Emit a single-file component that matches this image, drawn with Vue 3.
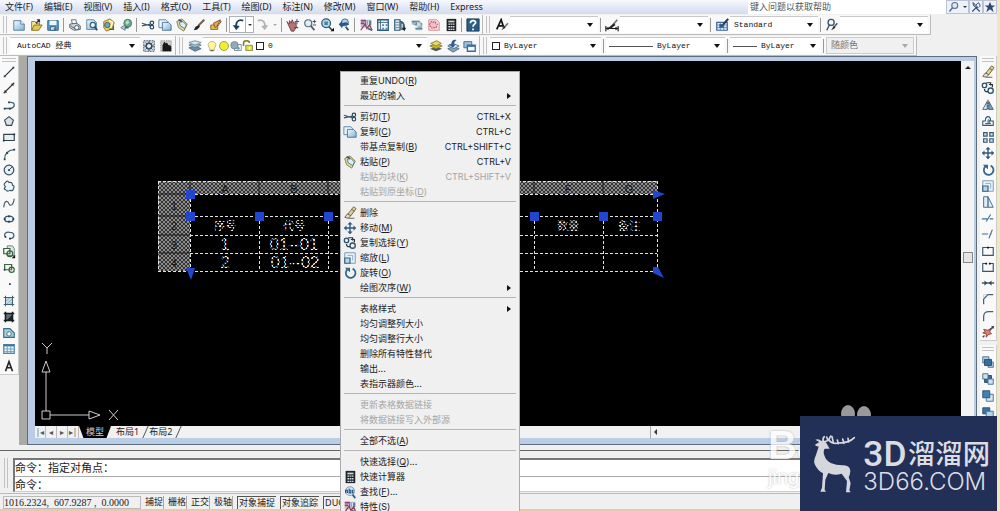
<script setup>
import { ref } from 'vue'

const menus = [
  ['文件', 'F'], ['编辑', 'E'], ['视图', 'V'], ['插入', 'I'], ['格式', 'O'], ['工具', 'T'],
  ['绘图', 'D'], ['标注', 'N'], ['修改', 'M'], ['窗口', 'W'], ['帮助', 'H'],
]

const standardTools = [
  ['new', 'open', 'save'],
  ['print', 'preview', 'publish', 'globe'],
  ['cut', 'copy', 'paste', 'brush', 'blockedit'],
]
const viewTools = [
  ['pan', 'zoom', 'zoomwin', 'zoomprev'],
  ['props', 'center', 'palette', 'sheet', 'markup', 'calc'],
  ['help'],
]
const drawTools = [
  'line', 'xline', 'pline', 'polygon', 'rect', 'arc', 'circle', 'cloud', 'spline', 'ellipse',
  'earc', 'insert', 'block', 'point', 'hatch', 'gradient', 'region', 'table', 'text',
]
const modifyTools = [
  'erase', 'copysel', 'mirror', 'offset', 'array', 'move', 'rotate', 'scale', 'stretch',
  'trim', 'extend', 'breakpt', 'break', 'join', 'chamfer', 'fillet', 'explode',
]
const orderTools = ['front', 'back', 'above', 'under']

const groups = [
  [
    { label: '重复UNDO', key: 'R' },
    { label: '最近的输入', sub: true },
  ],
  [
    { label: '剪切', key: 'T', icon: 'cut', hint: 'CTRL+X' },
    { label: '复制', key: 'C', icon: 'copy', hint: 'CTRL+C' },
    { label: '带基点复制', key: 'B', hint: 'CTRL+SHIFT+C' },
    { label: '粘贴', key: 'P', icon: 'paste', hint: 'CTRL+V' },
    { label: '粘贴为块', key: 'K', hint: 'CTRL+SHIFT+V', off: true },
    { label: '粘贴到原坐标', key: 'D', off: true },
  ],
  [
    { label: '删除', icon: 'erase' },
    { label: '移动', key: 'M', icon: 'move' },
    { label: '复制选择', key: 'Y', icon: 'copysel' },
    { label: '缩放', key: 'L', icon: 'scale' },
    { label: '旋转', key: 'O', icon: 'rotate' },
    { label: '绘图次序', key: 'W', sub: true },
  ],
  [
    { label: '表格样式', sub: true },
    { label: '均匀调整列大小' },
    { label: '均匀调整行大小' },
    { label: '删除所有特性替代' },
    { label: '输出...' },
    { label: '表指示器颜色...' },
  ],
  [
    { label: '更新表格数据链接', off: true },
    { label: '将数据链接写入外部源', off: true },
  ],
  [{ label: '全部不选', key: 'A' }],
  [
    { label: '快速选择', key: 'Q', tail: '...' },
    { label: '快速计算器', icon: 'calc' },
    { label: '查找', key: 'F', tail: '...', icon: 'find' },
    { label: '特性', key: 'S', icon: 'props' },
  ],
]

const modes = [
  ['捕捉', false], ['栅格', false], ['正交', false], ['极轴', false],
  ['对象捕捉', true], ['对象追踪', true], ['DUCS', true],
]

const columns = [155, 224, 293, 362, 430, 499, 568, 622]
const rows = [133, 155, 174, 192, 210]
const grips = [[155, 133], [155, 155], [224, 155], [293, 155], [499, 155], [568, 155], [622, 155]]
const cells = [
  ['序号', 190, 169, 11], ['代号', 259, 169, 11], ['数量', 533, 169, 11], ['备注', 594, 169, 11],
  ['1', 190, 189, 17], ['01--01', 259, 189, 17], ['2', 190, 207, 17], ['01--02', 260, 207, 17],
]
const heads = [['A', 190, 132], ['B', 259, 132], ['F', 533, 132], ['G', 594, 132], ['1', 139, 149], ['2', 139, 169], ['3', 139, 188], ['4', 139, 206]]

const question = ref('')
const command = ref('')
</script>

<template>
  <div class="app">
    <svg class="defs" aria-hidden="true">
      <defs>
        <linearGradient id="sheetFill" x1="0" y1="0" x2="1" y2="1">
          <stop offset="0" stop-color="#f4fbff" /><stop offset="1" stop-color="#7fb2d6" />
        </linearGradient>
        <pattern id="dots" width="4" height="4" patternUnits="userSpaceOnUse">
          <rect width="4" height="4" fill="#343434" />
          <rect width="2" height="2" fill="#8c8c8c" /><rect x="2" y="2" width="2" height="2" fill="#8c8c8c" />
        </pattern>
        <pattern id="spark" width="4" height="4" patternUnits="userSpaceOnUse">
          <rect width="4" height="4" fill="#333" />
          <rect width="2" height="2" fill="#fff" /><rect x="2" y="2" width="2" height="2" fill="#fff" />
        </pattern>
      </defs>
      <symbol id="i-new" viewBox="0 0 16 16"><path d="M2 3h8l4 4v7H2z" fill="url(#sheetFill)" stroke="#4c7896" /><path d="M10 3v4h4" fill="#fff" stroke="#4c7896" /></symbol>
      <symbol id="i-open" viewBox="0 0 16 16"><path d="M3 14V4h4l1 2h4v2" fill="#f7e79b" stroke="#8d7726" /><path d="M3 14l3-6h9l-4 6z" fill="#e8c84d" stroke="#7b671d" /><path d="M8 6l4-4M9 2h3v3" fill="none" stroke="#333" stroke-width="1.3" /></symbol>
      <symbol id="i-save" viewBox="0 0 16 16"><path d="M2 3h12v11H2z" fill="#5c9ac4" stroke="#255d85" /><path d="M4 3h8v5H4z" fill="#e8f5fc" /><path d="M5 10h6v4H5z" fill="#d9e6ef" stroke="#2d5c7d" /><path d="M9 11h1v3H9z" fill="#204968" /></symbol>
      <symbol id="i-print" viewBox="0 0 16 16"><path d="M4 2h5l1 5H5z" fill="#fff" stroke="#567" /><path d="M2 7l8-1 4 3v4l-7 1-5-3z" fill="#d2d8dd" stroke="#475a69" /><circle cx="10" cy="11" r="2.5" fill="#eef4f7" stroke="#456" /><path d="M3 9l5 3" stroke="#456" /></symbol>
      <symbol id="i-preview" viewBox="0 0 16 16"><path d="M2 2h8l3 3v8H2z" fill="url(#sheetFill)" stroke="#557f9b" /><circle cx="9" cy="8" r="3" fill="#eef9ff" stroke="#367" stroke-width="1.4" /><path d="M11 10l3 4" stroke="#324b60" stroke-width="2" /></symbol>
      <symbol id="i-publish" viewBox="0 0 16 16"><path d="M2 4l7-3 5 4-2 7-7 3-3-4z" fill="#e9ce54" stroke="#8b7524" /><circle cx="6" cy="8" r="3" fill="#72a5c5" stroke="#315a77" /><path d="M8 3l4 2-2 6" fill="none" stroke="#fff" stroke-width="1.5" /><path d="M8 13h5V9" fill="none" stroke="#367" stroke-width="1.5" /></symbol>
      <symbol id="i-globe" viewBox="0 0 16 16"><circle cx="10" cy="6" r="4.5" fill="#6ea39b" stroke="#447a70" /><path d="M7 5l3-3 2 3-3 3z" fill="#b8dfae" /><path d="M2 11l5-3v6z" fill="#bdd0d8" stroke="#567785" /><path d="M7 11h4" stroke="#367" stroke-width="2" /></symbol>
      <symbol id="i-cut" viewBox="0 0 16 16"><path d="M1 6l10 3M1 9l10-2" stroke="#3c5972" stroke-width="1.2" /><circle cx="12.5" cy="5.5" r="2" fill="none" stroke="#27455f" stroke-width="1.3" /><circle cx="12.5" cy="10.5" r="2" fill="none" stroke="#27455f" stroke-width="1.3" /></symbol>
      <symbol id="i-copy" viewBox="0 0 16 16"><path d="M1 2h8l2 2v7H1z" fill="#e9f5fb" stroke="#5580a0" /><path d="M5 5h7l3 3v6H5z" fill="url(#sheetFill)" stroke="#416f91" /></symbol>
      <symbol id="i-paste" viewBox="0 0 16 16"><path d="M2 4l6-3 6 6-4 8-6-4z" fill="#e4dda1" stroke="#77764b" /><path d="M5 5l4-1 4 4-2 4-5-3z" fill="#dceef7" stroke="#4d7182" /><path d="M4 2l4 2" stroke="#455" stroke-width="2" /></symbol>
      <symbol id="i-brush" viewBox="0 0 16 16"><path d="M14 2L7 9" stroke="#755d4a" stroke-width="2.4" /><path d="M8 8l1 2-3 3-4 1 2-4z" fill="#222" /></symbol>
      <symbol id="i-blockedit" viewBox="0 0 16 16"><path d="M2 8h8v5H2z" fill="#e0c34f" stroke="#7d6618" /><path d="M5 6l8-4-4 8-2 1z" fill="#e5a747" stroke="#7f5120" /><path d="M12 3l2 1-4 5" fill="none" stroke="#564331" /></symbol>
      <symbol id="i-undo" viewBox="0 0 16 16"><path d="M14 3C8 1 5 5 6 11" fill="none" stroke="#1e3e63" stroke-width="2" /><path d="M2 8l4 6 4-5z" fill="#1e3e63" /></symbol>
      <symbol id="i-redo" viewBox="0 0 16 16"><path d="M2 3c6-2 9 2 8 8" fill="none" stroke="#b3b3b3" stroke-width="2" /><path d="M6 9l4 5 4-6z" fill="#b3b3b3" /></symbol>
      <symbol id="i-pan" viewBox="0 0 16 16"><path d="M1 4l3 3V3l2 3 1-4 2 4 2-1 1 5-3 5H6z" fill="#b77474" stroke="#763d45" /><path d="M10 4h5M12.5 1v6M9 11h5" stroke="#315f83" stroke-width="1.2" /></symbol>
      <symbol id="i-zoom" viewBox="0 0 16 16"><circle cx="6" cy="6" r="4" fill="#e0edf1" stroke="#587281" stroke-width="1.4" /><path d="M9 9l4 5" stroke="#455e70" stroke-width="2" /><path d="M11 4h4M13 2v4M11 8h4" stroke="#345" /></symbol>
      <symbol id="i-zoomwin" viewBox="0 0 16 16"><circle cx="7" cy="6" r="5" fill="#b6d6e7" stroke="#305b7b" stroke-width="1.4" /><path d="M5 4h4v4H5z" fill="#4a83ac" /><path d="M10 10l4 4" stroke="#304c61" stroke-width="2" /><path d="M12 15h4v-4z" fill="#111" /></symbol>
      <symbol id="i-zoomprev" viewBox="0 0 16 16"><circle cx="9" cy="5" r="4" fill="#b5d3e8" stroke="#315e83" /><path d="M2 7l4-4v3c4-2 7-1 8 2-3-1-5 0-8 2v2z" fill="#28598e" /><path d="M10 10l3 4" stroke="#345" stroke-width="2" /></symbol>
      <symbol id="i-props" viewBox="0 0 16 16"><path d="M2 2h12v9H2z" fill="#c2c4d5" /><path d="M2 3h6M2 6h4" stroke="#9a3d70" stroke-width="2" /><path d="M7 3h7v5H7z" fill="#567c91" /><path d="M9 3v5M11 3v5" stroke="#fff" /><path d="M2 14l5-7 2 5 3-4 3 6" fill="none" stroke="#953c52" stroke-width="1.4" /><path d="M10 12l5 2" stroke="#3b6678" stroke-width="2" /></symbol>
      <symbol id="i-center" viewBox="0 0 16 16"><path d="M2 2h12v12H2z" fill="#eff7fa" stroke="#2c5b76" stroke-width="1.5" /><path d="M5 2v12M2 5h12" stroke="#2c5b76" /><path d="M7 7h2v2H7zM11 7h2v2h-2zM7 11h2v2H7zM11 11h2v2h-2z" fill="#4e829d" /></symbol>
      <symbol id="i-palette" viewBox="0 0 16 16"><path d="M2 2h6v12H2z" fill="#e4eff5" stroke="#2c5876" stroke-width="1.4" /><path d="M3 5h4M3 8h4M3 11h4" stroke="#4a7894" /><path d="M8 4q5 0 5 8" fill="none" stroke="#304f65" stroke-width="1.6" /><path d="M9 6h3v7H9z" fill="#b9cdd8" stroke="#304f65" /><path d="M10 11h5l-2 4z" fill="#222" /></symbol>
      <symbol id="i-sheet" viewBox="0 0 16 16"><path d="M2 3h8l4 3v8H6l3-4-7-3z" fill="#9eb8c4" /><path d="M2 4h8l-3 3h7M6 12h8" fill="none" stroke="#668797" stroke-width="1.5" /><path d="M8 4l5 3-5 4z" fill="#cbdbe2" /></symbol>
      <symbol id="i-markup" viewBox="0 0 16 16"><path d="M2 2h9l3 3v9H2z" fill="#f7d8dc" stroke="#d08a94" /><path d="M4 5q2-2 3 0 3-2 3 1 3 1 1 3 0 3-3 2-3 2-3-1-3-1-2-3z" fill="#f0bfc6" stroke="#bb4e60" stroke-width="1.2" stroke-dasharray="2 1" /></symbol>
      <symbol id="i-calc" viewBox="0 0 16 16"><path d="M3 1h11v14H3z" fill="#20242a" /><path d="M5 3h7v2H5z" fill="#c8d6cd" /><path d="M5 7h7M5 10h7M5 13h7" stroke="#d4d9db" stroke-width="1.6" stroke-dasharray="2 .6" /></symbol>
      <symbol id="i-help" viewBox="0 0 16 16"><path d="M1 1h14v14H1z" fill="#285d84" stroke="#173e5a" /><path d="M5 6c0-4 6-4 6-1 0 2-3 2-3 5" fill="none" stroke="#fff" stroke-width="2" /><path d="M7 12h2v2H7z" fill="#fff" /></symbol>
      <symbol id="i-textstyle" viewBox="0 0 16 16"><path d="M2 13L7 2l3 9M4 9h5" fill="none" stroke="#171717" stroke-width="2" /><path d="M15 6l-5 5" stroke="#777" stroke-width="2" /><path d="M11 9l1 2-5 3z" fill="#222" /></symbol>
      <symbol id="i-dimstyle" viewBox="0 0 16 16"><path d="M1 9v6M15 9v6M2 12h12" stroke="#111" stroke-width="1.3" /><path d="M1 12l3-2v4zM15 12l-3-2v4z" fill="#111" /><path d="M14 2L9 8" stroke="#777" stroke-width="2" /><path d="M10 6l2 2-5 4-4 0z" fill="#292929" /></symbol>
      <symbol id="i-tablestyle" viewBox="0 0 16 16"><path d="M2 5h12v9H2z" fill="#e7f0fa" stroke="#36669a" stroke-width="1.4" /><path d="M2 8h12M2 11h12M6 5v9M10 5v9" stroke="#5a83b2" /><path d="M15 1L8 9" stroke="#25394d" stroke-width="2.4" /><path d="M5 7h5v4H5z" fill="#305888" /></symbol>
      <symbol id="i-leader" viewBox="0 0 16 16"><circle cx="7" cy="5" r="3.5" fill="none" stroke="#37536a" stroke-width="1.5" /><path d="M5 8l-3 6M14 6l-4 5" stroke="#37536a" stroke-width="1.6" /><path d="M10 9l2 2-5 3z" fill="#222" /></symbol>
      <symbol id="i-gear" viewBox="0 0 16 16"><path d="M2 2h12v12H2z" fill="#d4dce4" stroke="#30475b" stroke-dasharray="2 1" /><circle cx="8" cy="8" r="3.2" fill="#eee" stroke="#344d62" stroke-width="1.7" /><path d="M8 2v3M8 11v3M2 8h3M11 8h3M4 4l2 2M10 10l2 2M12 4l-2 2M4 12l2-2" stroke="#344d62" /></symbol>
      <symbol id="i-mywork" viewBox="0 0 16 16"><path d="M2 2h12v12H2z" fill="#ccc" stroke="#777" stroke-dasharray="1 1" /><path d="M4 14V7l2-4 2 2 1-1 2 3h2l1 2v5z" fill="#171717" /></symbol>
      <symbol id="i-layers" viewBox="0 0 16 16"><path d="M1 10l7-2 7 3-7 3z" fill="#6d8da5" stroke="#4e6c82" /><path d="M1 7l7-3 7 3-7 3z" fill="#9eb9ca" stroke="#587990" /><path d="M1 4l7-2 7 2-7 3z" fill="#d8e6ed" stroke="#6e8da0" /></symbol>
      <symbol id="i-layerset" viewBox="0 0 16 16"><path d="M1 11l8-2 6 2-7 3z" fill="#4b5964" /><path d="M1 8l8-3 6 3-7 3z" fill="#c8bc3a" stroke="#857d20" /><path d="M2 5l7-3 5 3-6 3z" fill="#eadd62" stroke="#857d20" /></symbol>
      <symbol id="i-layerprev" viewBox="0 0 16 16"><path d="M2 11l7-2 6 2-7 4z" fill="#8da6b8" stroke="#4c6c83" /><path d="M2 8l6-3 7 3-6 3z" fill="#d4e5ee" stroke="#4c6c83" /><path d="M12 1C8 0 6 2 6 6H3l5 4 3-4H9c0-2 1-3 3-5z" fill="#335f90" /></symbol>
      <symbol id="i-layerstate" viewBox="0 0 16 16"><path d="M1 3h9v7H1z" fill="#9cc0dd" stroke="#3c6a94" /><path d="M5 7h9v7H5z" fill="#f3faff" stroke="#3c6a94" stroke-width="1.5" /><path d="M5 8h9" stroke="#3c6a94" stroke-width="2" /></symbol>
      <symbol id="i-bulb" viewBox="0 0 16 16"><path d="M5 11C1 7 3 2 8 2s7 5 3 9v3H5z" fill="#fff799" stroke="#aaa45f" /><path d="M6 14h4" stroke="#666" stroke-width="2" /></symbol>
      <symbol id="i-sun" viewBox="0 0 16 16"><circle cx="8" cy="8" r="6" fill="#f0ed32" stroke="#8a8428" /></symbol>
      <symbol id="i-freeze" viewBox="0 0 16 16"><path d="M6 6h9v8H6z" fill="#fff" stroke="#5c747f" /><circle cx="6" cy="7" r="5" fill="#91adb8" stroke="#62838f" /><circle cx="11" cy="11" r="2" fill="#789dab" /></symbol>
      <symbol id="i-lock" viewBox="0 0 16 16"><path d="M2 8V4q0-3 4-3t4 3" fill="none" stroke="#777c24" stroke-width="2" /><path d="M5 7h9v7H5z" fill="#d8da4b" stroke="#777c24" /><path d="M9 9h2v4H9z" fill="#fff" /></symbol>
      <symbol id="i-line" viewBox="0 0 16 16"><path d="M3 13L13 3" stroke="#25292c" stroke-width="1.3" /><path d="M2 12h2v2H2zM12 2h2v2h-2z" fill="#253f4e" /></symbol>
      <symbol id="i-xline" viewBox="0 0 16 16"><path d="M2 14L14 2" stroke="#2c3438" stroke-width="1.3" /><path d="M3 10v3h3zM10 3h3v3z" fill="#222" /></symbol>
      <symbol id="i-pline" viewBox="0 0 16 16"><path d="M3 12h8M8 5h2q4 0 4 3t-4 4" fill="none" stroke="#47677c" stroke-width="1.5" /><path d="M2 11h2v2H2zM8 11h2v2H8zM7 4h2v2H7z" fill="#243a48" /></symbol>
      <symbol id="i-polygon" viewBox="0 0 16 16"><path d="M8 3l5 4-2 6H5L3 7z" fill="#d8e2e7" stroke="#364b58" stroke-width="1.3" /></symbol>
      <symbol id="i-rect" viewBox="0 0 16 16"><path d="M2 5h12v7H2z" fill="#e6eef2" stroke="#31434f" stroke-width="1.3" /><path d="M1 11h2v2H1zM13 4h2v2h-2z" fill="#243947" /></symbol>
      <symbol id="i-arc" viewBox="0 0 16 16"><path d="M3 14Q3 4 14 3" fill="none" stroke="#456377" stroke-width="1.4" /><path d="M2 13h2v2H2zM5 6h2v2H5zM13 2h2v2h-2z" fill="#263d4c" /></symbol>
      <symbol id="i-circle" viewBox="0 0 16 16"><circle cx="8" cy="8" r="5.5" fill="#e8f0f4" stroke="#345369" stroke-width="1.4" /><path d="M8 8l4-4" stroke="#345" /><path d="M7 7h2v2H7z" fill="#245" /></symbol>
      <symbol id="i-cloud" viewBox="0 0 16 16"><path d="M4 9Q1 6 4 4q2-3 4 0 4-1 4 3 3 1 1 4 0 3-4 2-3 2-5-1-3 0 0-3z" fill="#eff5f7" stroke="#38586b" stroke-width="1.3" /></symbol>
      <symbol id="i-spline" viewBox="0 0 16 16"><path d="M2 13C3 3 7 6 8 9s5 2 6-6" fill="none" stroke="#455b69" stroke-width="1.3" /></symbol>
      <symbol id="i-ellipse" viewBox="0 0 16 16"><ellipse cx="8" cy="8" rx="5" ry="3.3" fill="#eff5f8" stroke="#36566d" stroke-width="1.5" /><path d="M2 7h2v2H2zM12 7h2v2h-2zM7 4h2v2H7zM7 10h2v2H7z" fill="#243b4b" /></symbol>
      <symbol id="i-earc" viewBox="0 0 16 16"><path d="M4 10C1 7 5 4 9 5c6 0 6 7 0 7" fill="none" stroke="#43647b" stroke-width="1.5" /><path d="M3 9h2v2H3zM8 11h2v2H8z" fill="#294253" /></symbol>
      <symbol id="i-insert" viewBox="0 0 16 16"><path d="M6 1h6l2 3v8H6z" fill="#dde8ea" stroke="#607478" /><path d="M2 4h7v6H2z" fill="#eef8e6" stroke="#35613c" stroke-width="1.4" /><circle cx="9" cy="10" r="3.3" fill="none" stroke="#35613c" stroke-width="1.4" /><path d="M11 15h4v-4z" fill="#111" /></symbol>
      <symbol id="i-block" viewBox="0 0 16 16"><path d="M3 4h8v6H3z" fill="#edf5e5" stroke="#406642" stroke-width="1.4" /><circle cx="11" cy="10" r="3" fill="none" stroke="#35613c" stroke-width="1.3" /><path d="M2 9h2v2H2z" fill="#235" /></symbol>
      <symbol id="i-point" viewBox="0 0 16 16"><path d="M8 7h2v2H8z" fill="#263f50" /></symbol>
      <symbol id="i-hatch" viewBox="0 0 16 16"><path d="M4 4h8v8H4z" fill="#c6dfea" /><path d="M5 8l4-4M5 12l7-7M9 12l3-3" stroke="#7ba3ba" /><path d="M4 2v12M12 2v12M2 4h12M2 12h12" stroke="#3b6279" stroke-width="1.2" /></symbol>
      <symbol id="i-gradient" viewBox="0 0 16 16"><path d="M4 4h8v8H4z" fill="#627079" /><path d="M5 12l7-7v7z" fill="#222" /><path d="M4 2v12M12 2v12M2 4h12M2 12h12" stroke="#161e25" stroke-width="1.8" /></symbol>
      <symbol id="i-region" viewBox="0 0 16 16"><path d="M2 3h7l5 5v5H2z" fill="#a8cddd" stroke="#376d88" stroke-width="1.3" /><circle cx="8" cy="9" r="2.5" fill="#fff" stroke="#376d88" /></symbol>
      <symbol id="i-table" viewBox="0 0 16 16"><path d="M2 3h12v10H2z" fill="#edf7fc" stroke="#5083a6" stroke-width="1.4" /><path d="M2 4h12" stroke="#406f94" stroke-width="2" /><path d="M2 8h12M2 11h12M6 4v9M10 4v9" stroke="#6698b8" /></symbol>
      <symbol id="i-text" viewBox="0 0 16 16"><path d="M4 14L8 3l4 11M5 10h6" fill="none" stroke="#252525" stroke-width="1.8" /></symbol>
      <symbol id="i-erase" viewBox="0 0 16 16"><path d="M12 1l3 2-6 8-4-1z" fill="#ddd391" stroke="#666132" /><path d="M5 9l4 2-3 3-4-1z" fill="#e9d8cf" stroke="#66584c" /><path d="M6 14h7" stroke="#555" /><path d="M10 4l3 2" stroke="#555" /></symbol>
      <symbol id="i-copysel" viewBox="0 0 16 16"><circle cx="4" cy="5" r="2.5" fill="none" stroke="#2b526f" stroke-width="1.5" /><circle cx="11" cy="11" r="3" fill="none" stroke="#2b526f" stroke-width="1.5" /><path d="M6 2h5v3M4 9q0 4 4 3M9 4h4v3" fill="none" stroke="#333" stroke-width="1.4" /></symbol>
      <symbol id="i-mirror" viewBox="0 0 16 16"><path d="M2 13L7 4v9z" fill="#e5edf3" stroke="#2f5878" /><path d="M14 13L9 4v9z" fill="#7fa6c1" stroke="#2f5878" /><path d="M8 2v12" stroke="#222" stroke-dasharray="2 1" /></symbol>
      <symbol id="i-offset" viewBox="0 0 16 16"><path d="M2 13V8h3Q5 3 8 3t3 5h3v5z" fill="none" stroke="#335a75" stroke-width="1.2" /><path d="M5 11h3V7q2-2 2 3l1 1z" fill="#a5bfd0" stroke="#335a75" /></symbol>
      <symbol id="i-array" viewBox="0 0 16 16"><path d="M3 3h4v4H3zM10 3h4v4h-4zM3 10h4v4H3zM10 10h4v4h-4z" fill="#d1dde5" stroke="#345a74" stroke-width="1.3" /></symbol>
      <symbol id="i-move" viewBox="0 0 16 16"><path d="M8 2v12M2 8h12" stroke="#2d5b7d" stroke-width="1.6" /><path d="M8 1l3 3H5zM8 15l3-3H5zM1 8l3-3v6zM15 8l-3-3v6z" fill="#2d5b7d" /></symbol>
      <symbol id="i-rotate" viewBox="0 0 16 16"><path d="M5 4a5.5 5.5 0 1 0 6-1" fill="none" stroke="#34658a" stroke-width="2" /><path d="M2 2h6v5z" fill="#34658a" /></symbol>
      <symbol id="i-scale" viewBox="0 0 16 16"><path d="M2 2h12v12H2z" fill="#e8f3fa" stroke="#7191aa" /><path d="M2 8h6v6H2z" fill="#bad5e5" stroke="#3a6688" stroke-width="1.4" /><path d="M5 5h6v6" fill="none" stroke="#86a6bf" /></symbol>
      <symbol id="i-stretch" viewBox="0 0 16 16"><path d="M3 2h5l6 12H3z" fill="#e0edf5" stroke="#36627f" /><path d="M8 2v12" stroke="#36627f" stroke-width="1.4" /></symbol>
      <symbol id="i-trim" viewBox="0 0 16 16"><path d="M1 9h6M10 9h4M6 12l5-8" stroke="#426e8d" stroke-width="1.3" /></symbol>
      <symbol id="i-extend" viewBox="0 0 16 16"><path d="M1 8h7M10 8h2M9 13l4-10" stroke="#426e8d" stroke-width="1.3" /></symbol>
      <symbol id="i-breakpt" viewBox="0 0 16 16"><path d="M2 4h12v9H2z" fill="none" stroke="#35566e" stroke-width="1.3" /><path d="M7 3h2v2H7z" fill="#111" /></symbol>
      <symbol id="i-break" viewBox="0 0 16 16"><path d="M6 4H2v9h12V4h-4" fill="none" stroke="#35566e" stroke-width="1.3" /><path d="M5 3h2v2H5zM9 3h2v2H9z" fill="#111" /></symbol>
      <symbol id="i-join" viewBox="0 0 16 16"><path d="M1 8h14" stroke="#333" stroke-width="1.4" /><path d="M7 8L4 5v6zM9 8l3-3v6z" fill="#27475e" /></symbol>
      <symbol id="i-chamfer" viewBox="0 0 16 16"><path d="M3 14V8l5-5h6" fill="none" stroke="#40647d" stroke-width="1.4" /><path d="M3 8V3h5" fill="none" stroke="#999" stroke-dasharray="1 1" /></symbol>
      <symbol id="i-fillet" viewBox="0 0 16 16"><path d="M3 14V9q0-6 6-6h5" fill="none" stroke="#40647d" stroke-width="1.4" /></symbol>
      <symbol id="i-explode" viewBox="0 0 16 16"><path d="M3 5l5 1 3-2-1 4 2 2-4 1-2 3v-4L2 9l3-1z" fill="#d98570" stroke="#93392d" /><path d="M10 6l4-4M12 2h2v2M4 12l-2 2" fill="none" stroke="#324d63" stroke-width="1.6" /></symbol>
      <symbol id="i-front" viewBox="0 0 16 16"><path d="M2 2h7v7H2zM8 8h6v6H8z" fill="#bfd2e1" stroke="#466986" /><path d="M4 5h8v7H4z" fill="#356d9e" stroke="#244c70" /></symbol>
      <symbol id="i-back" viewBox="0 0 16 16"><path d="M4 4h8v8H4z" fill="#3b6a92" stroke="#23496a" /><path d="M2 2h6v6H2zM8 8h6v6H8z" fill="#cfe1ed" stroke="#466986" /></symbol>
      <symbol id="i-above" viewBox="0 0 16 16"><path d="M6 6h8v8H6z" fill="#d6e4ee" stroke="#466986" /><path d="M2 2h8v8H2z" fill="#4680b1" stroke="#294f72" /></symbol>
      <symbol id="i-under" viewBox="0 0 16 16"><path d="M2 2h8v7H2z" fill="#3e729d" stroke="#294f72" /><path d="M6 6h8v8H6z" fill="#b3d3e7" stroke="#466986" /></symbol>
      <symbol id="i-find" viewBox="0 0 16 16"><circle cx="8" cy="7" r="5" fill="#d5e9f3" stroke="#7d9fb6" stroke-width="1.3" /><path d="M3 9V6h2v3M7 4v5h2V6H7M12 6h-1v3h1" fill="none" stroke="#245383" stroke-width="1.3" /><path d="M11 11l3 4" stroke="#345b78" stroke-width="2" /></symbol>
      <symbol id="i-search" viewBox="0 0 16 16"><circle cx="9" cy="6" r="4" fill="#dce7f2" stroke="#5a708d" stroke-width="1.4" /><path d="M6 9l-4 5" stroke="#5a708d" stroke-width="2" /></symbol>
      <symbol id="i-comm" viewBox="0 0 16 16"><path d="M3 14l5-5 5 5M8 9V6" fill="none" stroke="#344d6f" stroke-width="1.6" /><path d="M4 2q0 7 7 7z" fill="#9fb3cd" stroke="#344d6f" stroke-width="1.3" /><path d="M8 5l4-3M12 3q2 2 1 5" fill="none" stroke="#344d6f" stroke-width="1.3" /></symbol>
      <symbol id="i-star" viewBox="0 0 16 16"><path d="M8 1l2 5h5l-4 3 2 6-5-4-5 4 2-6-4-3h5z" fill="#30486d" /></symbol>
    </svg>

    <header class="menubar">
      <nav class="menus" aria-label="主菜单">
        <button v-for="m in menus" :key="m[0]" type="button">{{ m[0] }}({{ m[1] }})</button>
        <button type="button">Express</button>
      </nav>
      <div class="infocenter">
        <input v-model="question" type="text" placeholder="键入问题以获取帮助" aria-label="键入问题以获取帮助">
        <button type="button" class="wide" aria-label="搜索"><svg><use href="#i-search" /></svg><i class="mini"></i></button>
        <button type="button" aria-label="通讯中心"><svg><use href="#i-comm" /></svg></button>
        <button type="button" aria-label="收藏夹"><svg><use href="#i-star" /></svg></button>
      </div>
    </header>

    <div class="bars">
      <div class="bar">
        <i class="grip"></i>
        <template v-for="(g, n) in standardTools" :key="n">
          <button v-for="t in g" :key="t" type="button" class="tool" :aria-label="t"><svg><use :href="'#i-' + t" /></svg></button>
          <i class="sep"></i>
        </template>
        <button type="button" class="tool undo" aria-label="放弃"><svg><use href="#i-undo" /></svg></button>
        <button type="button" class="drop" aria-label="放弃列表"><i class="mini"></i></button>
        <button type="button" class="tool" aria-label="重做" disabled><svg><use href="#i-redo" /></svg></button>
        <button type="button" class="drop plain" aria-label="重做列表" disabled><i class="mini"></i></button>
        <template v-for="(g, n) in viewTools" :key="'v' + n">
          <i class="sep"></i>
          <button v-for="t in g" :key="t" type="button" class="tool" :aria-label="t"><svg><use :href="'#i-' + t" /></svg></button>
        </template>
        <i class="edge"></i><i class="grip"></i>
        <span class="tool"><svg><use href="#i-textstyle" /></svg></span>
        <span class="combo"><select aria-label="文字样式"><option></option></select></span>
        <i class="sep"></i>
        <span class="tool"><svg><use href="#i-dimstyle" /></svg></span>
        <span class="combo"><select aria-label="标注样式"><option></option></select></span>
        <i class="sep"></i>
        <span class="tool"><svg><use href="#i-tablestyle" /></svg></span>
        <span class="combo"><select aria-label="表格样式"><option>Standard</option></select></span>
        <i class="sep"></i>
        <span class="tool"><svg><use href="#i-leader" /></svg></span>
        <span class="combo"><select aria-label="多重引线样式"><option></option></select></span>
      </div>
      <div class="bar">
        <i class="grip"></i>
        <span class="combo workspace-name"><select aria-label="工作空间"><option>AutoCAD 经典</option></select></span>
        <button type="button" class="tool" aria-label="工作空间设置"><svg><use href="#i-gear" /></svg></button>
        <button type="button" class="tool" aria-label="我的工作空间"><svg><use href="#i-mywork" /></svg></button>
        <i class="edge"></i><i class="grip"></i>
        <button type="button" class="tool" aria-label="图层特性管理器"><svg><use href="#i-layers" /></svg></button>
        <span class="combo layer">
          <svg v-for="t in ['bulb', 'sun', 'freeze', 'lock']" :key="t"><use :href="'#i-' + t" /></svg>
          <i class="swatch"></i>
          <select aria-label="图层"><option>0</option></select>
        </span>
        <button v-for="t in ['layerset', 'layerprev', 'layerstate']" :key="t" type="button" class="tool" :aria-label="t"><svg><use :href="'#i-' + t" /></svg></button>
        <i class="edge"></i><i class="grip"></i>
        <span class="combo colour"><i class="swatch"></i><select aria-label="颜色"><option>ByLayer</option></select></span>
        <i class="sep"></i>
        <span class="combo linetype"><i class="rule"></i><select aria-label="线型"><option>ByLayer</option></select></span>
        <i class="sep"></i>
        <span class="combo weight"><i class="rule"></i><select aria-label="线宽"><option>ByLayer</option></select></span>
        <i class="sep"></i>
        <span class="combo off"><select aria-label="打印样式" disabled><option>随颜色</option></select></span>
      </div>
    </div>

    <main class="workspace">
      <aside class="dock">
        <div class="palette draw">
          <i class="grip-h"></i>
          <button v-for="t in drawTools" :key="t" type="button" :aria-label="t"><svg><use :href="'#i-' + t" /></svg></button>
        </div>
      </aside>
      <i class="gutter"></i>
      <section class="document">
        <div class="view">
          <svg class="drawing">
            <rect x="123" y="120" width="499" height="13" fill="url(#dots)" />
            <rect x="123" y="133" width="32" height="77" fill="url(#dots)" />
            <path d="M123 120H622M123 120V210" class="dash" />
            <path v-for="y in rows" :key="y" :d="`M155 ${y}H622`" class="dash" />
            <path v-for="x in columns" :key="x" :d="x === 155 || x === 622 ? `M${x} 133V210` : `M${x} 155V210`" class="dash" />
            <path d="M622 120V133M123 210H155" class="dash" />
            <path d="M155 120v13M224 120v13M293 120v13M499 120v13M568 120v13M123 133h32M123 155h32M123 174h32M123 192h32" stroke="#181818" />
            <text v-for="h in heads" :key="h[0]" :x="h[1]" :y="h[2]" class="head">{{ h[0] }}</text>
            <text v-for="c in cells" :key="c[0]" :x="c[1]" :y="c[2]" :font-size="c[3]" class="cell">{{ c[0] }}</text>
            <rect v-for="(g, n) in grips" :key="n" :x="g[0] - 4" :y="g[1] - 4" width="9" height="9" class="handle" />
            <path d="M151 207h9l-4 12zM618 129l12 4-12 5zM618 206h5l6 11-11-5z" class="handle" />
            <g class="ucs">
              <path d="M7 350h8v8H7zM11 350V311M15 354h39M11 300l4 11H7zM65 354l-11-4v8z" />
              <path d="M7 282l5 5 5-5M12 287v6M74 349l9 10M83 349l-9 10" />
            </g>
          </svg>
          <div class="vscroll"><i class="up"></i><i class="thumb"></i></div>
        </div>
        <div class="tabs">
          <button v-for="t in ['|◂', '◂', '▸', '▸|']" :key="t" type="button" class="step">{{ t }}</button>
          <button type="button" class="tab current">模型</button>
          <button type="button" class="tab">布局1</button>
          <button type="button" class="tab">布局2</button>
          <div class="hscroll"><i class="left"></i></div>
        </div>
      </section>
      <aside class="dock right">
        <div class="palette modify">
          <i class="grip-h"></i>
          <button v-for="t in modifyTools" :key="t" type="button" :aria-label="t"><svg><use :href="'#i-' + t" /></svg></button>
        </div>
        <div class="palette order">
          <i class="grip-h"></i>
          <button v-for="t in orderTools" :key="t" type="button" :aria-label="t"><svg><use :href="'#i-' + t" /></svg></button>
        </div>
      </aside>
    </main>

    <section class="command">
      <i class="grip tall"></i>
      <div class="console">
        <p>命令：指定对角点：</p>
        <label>命令：<input v-model="command" type="text"></label>
      </div>
    </section>

    <footer class="status">
      <output>1016.2324,&nbsp; 607.9287 ,&nbsp; 0.0000</output>
      <button v-for="m in modes" :key="m[0]" type="button" :class="{ on: m[1] }" :aria-pressed="m[1]">{{ m[0] }}</button>
    </footer>

    <div class="context" role="menu">
      <template v-for="(g, n) in groups" :key="n">
        <hr v-if="n">
        <button v-for="i in g" :key="i.label" type="button" role="menuitem" :disabled="i.off">
          <span class="pic"><svg v-if="i.icon"><use :href="'#i-' + i.icon" /></svg></span>
          <span class="name">{{ i.label }}<template v-if="i.key">(<u>{{ i.key }}</u>)</template>{{ i.tail }}</span>
          <span v-if="i.hint">{{ i.hint }}</span>
          <i v-if="i.sub" class="more"></i>
        </button>
      </template>
    </div>

    <div class="stamp" aria-hidden="true">
      <svg class="paw"><ellipse cx="7" cy="10" rx="7" ry="9" /><ellipse cx="23" cy="11" rx="7" ry="9" /></svg>
      <b>Bai</b>
      <span>jingyan</span>
    </div>
    <div class="brand">
      <svg viewBox="120 78 600 285" role="img" aria-label="3D溜溜网 3D66.COM">
        <g fill="#d5d7dc">
          <path d="M165 164l13-8-12-7q12-3 18 4l5-2q8 2 12 12l8 13-15 0q-6 9 0 23 4 12 18 20 19 8 39 7 19 1 20 17-1 13-5 18l6 19-4 21 4 6h-14l3-34-16-22q-22 7-40-2l-9 20-2 30 4 6h-17l5-12 3-43q-17-10-24-26-6-10 3-29l8-25-9-3z" />
        </g>
        <path d="M190 155q-3-10 3-15M193 155q13 0 19-17M204 151l-4-10M207 150q9 14 29 9 32 0 47-16M220 157l-4-17M235 161l-3-11M252 160l-4-13M266 156l-2-11" fill="none" stroke="#d5d7dc" stroke-width="5" stroke-linecap="round" />
        <text x="310" y="229" class="big">3D</text>
        <text x="444" y="221" class="han">溜溜网</text>
        <text x="310" y="299" class="site">3D66.COM</text>
      </svg>
    </div>
  </div>
</template>

<style>
body { background: #f0f0f0; overflow: hidden; }
</style>

<style scoped>
.app {
  position: relative;
  display: flex;
  flex-direction: column;
  box-sizing: border-box;
  height: 100vh;
  overflow: hidden;
  border-right: 3px solid #eee9bd;
  background: #f0f0f0;
  color: #222;
  font: 9px/14px "Noto Sans", "Noto Sans CJK SC", sans-serif;
}
.defs { position: absolute; width: 0; height: 0; }
button, input, select { margin: 0; padding: 0; border: 0; background: none; color: inherit; font: inherit; outline: none; }
i { display: block; flex: none; font-style: normal; }
svg { display: block; flex: none; }

.menubar { display: flex; height: 14px; background: linear-gradient(#f6f8fd, #d3dbef); }
.menus { display: flex; flex: 1; gap: 11px; padding-left: 5px; white-space: nowrap; }
.infocenter { display: flex; width: 249px; background: #fff; }
.infocenter input { flex: 1; min-width: 0; padding-left: 2px; }
.infocenter input::placeholder { color: #555; opacity: 1; }
.infocenter button { display: flex; align-items: center; justify-content: center; width: 14px; border: 1px solid #bcc4d4; box-sizing: border-box; background: #edf1f9; }
.infocenter .wide { width: 23px; gap: 3px; }
.infocenter svg { width: 12px; height: 12px; }
.mini { width: 0; border: 2px solid transparent; border-top-color: #333; border-bottom: 0; }

.bars { display: flex; flex-direction: column; align-items: flex-start; gap: 1px; padding-top: 1px; }
.bar { display: flex; align-items: center; height: 19px; padding: 0 2px; border-bottom: 1px solid #bcbcbc; border-right: 1px solid #bcbcbc; background: #f8f8f8; }
.grip { width: 2px; height: 17px; margin: 0 3px 0 1px; border: 1px solid #c3c3c3; border-width: 0 1px; }
.sep { width: 1px; height: 14px; margin: 0 2px; background: #999; }
.edge { width: 1px; height: 19px; margin: 0 2px 0 1px; background: #bbb; }
.tool { display: flex; align-items: center; justify-content: center; width: 17px; height: 17px; }
.tool svg { width: 14px; height: 14px; }
.undo { border: 1px solid #aab3bb; box-sizing: border-box; background: #fff; }
.drop { display: flex; align-items: center; justify-content: center; width: 8px; height: 17px; box-sizing: border-box; border: 1px solid #aab3bb; border-left: 0; background: #fff; }
.drop.plain { border: 0; background: none; opacity: .4; }
.combo { display: flex; align-items: center; position: relative; box-sizing: border-box; width: 88px; height: 17px; border-top: 1px solid #c9c9c9; background: #fff; }
.combo select { appearance: none; flex: 1; min-width: 0; height: 16px; padding: 0 14px 0 4px; color: #111; opacity: 1; font: 8px/16px "Liberation Mono", "Noto Sans CJK SC", monospace; }
.combo::after { content: ""; position: absolute; right: 5px; top: 6px; border: 3px solid transparent; border-top: 4px solid #111; border-bottom: 0; pointer-events: none; }
.combo svg { width: 12px; height: 12px; }
.workspace-name { width: 130px; }
.workspace-name select { padding-left: 7px; }
.layer { width: 224px; padding-left: 3px; }
.swatch { width: 6px; height: 6px; margin-left: 2px; border: 1px solid #222; }
.colour { width: 111px; }
.linetype { width: 119px; }
.rule { width: 44px; height: 1px; margin-left: 3px; background: #555; }
.weight .rule { width: 24px; }
.weight { width: 91px; }
.off { border: 1px solid #ccc; background: #f0f0f0; }
.off select { color: #777; font-size: 9px; }
.off::after { border-top-color: #aaa; }

.workspace { display: flex; flex: 1; min-height: 0; }
.dock { width: 19px; }
.palette { display: flex; flex-direction: column; align-items: center; border: 1px solid #ccc; border-width: 0 1px 1px 0; background: #f9f9f9; }
.palette button { display: flex; flex: 1; align-items: center; justify-content: center; min-height: 0; }
.palette svg { width: 14px; height: 14px; }
.grip-h { align-self: stretch; height: 2px; margin: 2px; border: 1px solid #c3c3c3; border-width: 1px 0; }
.draw { height: 318px; }
.gutter { width: 8px; margin-bottom: 5px; background: #aaaaa6; }
.document { display: flex; flex: 1; flex-direction: column; min-width: 0; margin-bottom: 5px; padding: 4px 2px 6px 7px; border: 1px solid #5c6d7d; background: #bacde5; }
.view { display: flex; flex: 1; min-height: 0; }
.drawing { flex: 1; min-width: 0; height: 100%; background: #000; }
.vscroll { display: flex; flex-direction: column; align-items: center; width: 13px; background: #f3f3f3; }
.up { margin-top: 5px; border: 3px solid transparent; border-bottom-color: #222; border-top: 0; }
.thumb { width: 8px; height: 9px; margin-top: 183px; border: 1px solid #888; background: #e5e5e5; }
.right { display: flex; flex-direction: column; gap: 4px; width: 17px; margin-left: 3px; }
.modify { height: 284px; }
.order { height: 76px; }
.dash { fill: none; stroke: #e2e2e2; stroke-dasharray: 3 2; shape-rendering: crispEdges; }
.head { fill: #171717; font: 11px "Liberation Sans", sans-serif; text-anchor: middle; }
.cell { fill: url(#spark); font-family: "Liberation Sans", "Noto Sans CJK SC", sans-serif; text-anchor: middle; }
.handle { fill: #2146d0; }
.ucs { fill: none; stroke: #ccc; }

.tabs { display: flex; height: 12px; background: #f1f1f1; line-height: 12px; }
.step { width: 11px; border-right: 1px solid #bbb; color: #555; font-size: 8px; }
.tab { position: relative; padding: 0 5px; }
.tab::after { content: ""; position: absolute; right: -2px; top: 0; width: 1px; height: 12px; background: #555; transform: skewX(-24deg); }
.tab.current { padding: 0 7px; background: #000; color: #ccc; clip-path: polygon(0 0, 100% 0, 86% 100%, 14% 100%); }
.hscroll { width: 320px; margin-left: auto; padding: 3px 0 0 3px; border-left: 1px solid #aaa; }
.left { width: 0; border: 3px solid transparent; border-right-color: #333; border-left: 0; }

.command { display: flex; gap: 2px; padding: 7px 3px 1px; border-top: 1px solid #666; }
.tall { height: 30px; }
.console { flex: 1; border-top: 2px solid #777; border-left: 2px solid #777; border-bottom: 1px solid #ccc; background: #fff; font: 11px/14px "Noto Sans CJK SC", sans-serif; }
.console p { margin: 0; padding-bottom: 2px; border-bottom: 1px solid #aaa; }
.console label { display: flex; }
.console input { flex: 1; }

.status { display: flex; align-items: center; gap: 4px; height: 14px; padding: 1px 3px 0; border-top: 1px solid #bbb; border-bottom: 2px solid #ddd29b; }
.status output { box-sizing: border-box; width: 138px; height: 13px; border: 1px solid #bbb; font: 10px/12px "Liberation Serif", serif; white-space: nowrap; }
.status button { height: 13px; border-right: 1px solid #aaa; line-height: 12px; white-space: nowrap; }
.status .on { padding: 0 1px; border: 1px solid #555; border-width: 1px 0 0 1px; }

.context { position: absolute; left: 340px; top: 71px; box-sizing: border-box; width: 180px; padding: 1px; border: 1px solid #aaa; background: #f0f0f0; font-family: "Inter", "Noto Sans CJK SC", sans-serif; }
.context button { display: flex; align-items: center; width: 100%; height: 15px; padding: 0 7px 0 1px; line-height: 15px; white-space: nowrap; }
.context button:disabled { color: #a5a5a5; }
.pic { display: flex; width: 17px; }
.pic svg { width: 14px; height: 14px; }
.name { flex: 1; text-align: left; }
.more { border: 3px solid transparent; border-left: 4px solid #111; border-right: 0; }
.context hr { height: 1px; margin: 2px 2px 3px; border: 0; background: #b5b5b5; }

.stamp { position: absolute; left: 768px; top: 404px; display: flex; flex-direction: column; color: #fff; opacity: .75; text-shadow: 0 0 2px #999; }
.paw { width: 40px; height: 20px; margin-left: 73px; fill: #ccc; }
.stamp b { font: bold 40px/42px "Liberation Sans", sans-serif; }
.stamp span { font: 20px/22px "Liberation Sans", sans-serif; }
.brand { position: absolute; right: -3px; bottom: 0; width: 200px; height: 95px; background: #223057; }
.brand svg { width: 200px; height: 95px; }
.brand text { fill: #dcdde1; }
.big { font: 500 106px Roboto, sans-serif; }
.han { font: 500 82px "Noto Sans CJK SC", sans-serif; }
.site { font: 300 72px Inter, sans-serif; }
</style>
